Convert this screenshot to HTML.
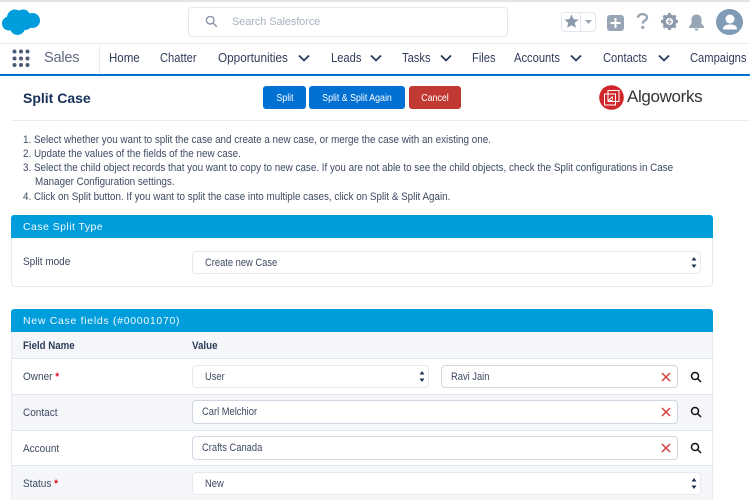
<!DOCTYPE html>
<html><head><meta charset="utf-8">
<style>
html,body{margin:0;padding:0;background:#fff}
#p{position:relative;width:750px;height:500px;overflow:hidden;background:#fff;font-family:"Liberation Sans",sans-serif;color:#3e4a63;font-size:11px}
#p div,#p span,#p svg{position:absolute}
.t{white-space:nowrap;line-height:14px}
.n{top:51px;font-size:12.5px;color:#2f3c5a;line-height:14px;white-space:nowrap;transform:scaleX(.893);transform-origin:0 0}
.b{top:86px;height:23px;line-height:24px;color:#fff;background:#0070d2;border-radius:3px;font-size:10.5px}
.b span{left:50%;top:0;white-space:nowrap;transform:translateX(-50%) scaleX(.84)}
.h{left:11px;width:702px;height:23px;background:#009ddc;border-radius:3px 3px 0 0;}
.ht{left:23px;color:#f2f9fd;font-size:10.5px;line-height:14px;white-space:nowrap}
.box{background:#fff;border:1px solid #e6e9ef;border-radius:4px;box-sizing:border-box}
.inp{background:#fff;border:1px solid #cfd7e3;border-radius:4px;box-sizing:border-box}
.l{left:23px;font-size:11px;color:#3e4a63;white-space:nowrap;line-height:14px;transform:scaleX(.91);transform-origin:0 0}
.v{font-size:11px;color:#3e4a63;white-space:nowrap;line-height:14px;transform:scaleX(.85);transform-origin:0 0}
.line{left:11px;width:702px;height:1px;background:#e2e6ee}
.req{color:#e01020;font-weight:bold}
.i{left:23px;font-size:11px;color:#3e4a63;white-space:nowrap;line-height:14px;transform:scaleX(.895);transform-origin:0 0}
</style></head><body>
<div id="p">
<div style="left:0;top:0;width:750px;height:2px;background:#e4e4e4"></div>
<svg style="left:2px;top:9px" width="39" height="27" viewBox="0 0 39 27"><g fill="#009ddc"><circle cx="13" cy="8.500" r="8"/><circle cx="21" cy="8" r="7.500"/><circle cx="30.500" cy="11.500" r="7.500"/><circle cx="7" cy="14.500" r="7"/><circle cx="15.500" cy="18.500" r="7.500"/><circle cx="23" cy="13" r="8"/></g></svg>
<div style="left:188px;top:7px;width:320px;height:30px;border:1px solid #e4e7ee;border-radius:4px;box-sizing:border-box"></div>
<svg style="left:205px;top:15px" width="13" height="13" viewBox="0 0 13 13" fill="none" stroke="#8a95a6" stroke-width="1.4"><circle cx="5.2" cy="5.2" r="3.8"/><path d="M8 8l3.8 3.8"/></svg>
<span class="t" style="left:232px;top:15px;font-size:11px;color:#a9b2c2;letter-spacing:-.1px">Search Salesforce</span>
<div style="left:561px;top:12px;width:35px;height:20px;border:1px solid #e2e6ee;border-radius:4px;box-sizing:border-box"></div>
<div style="left:580px;top:12px;width:1px;height:20px;background:#e2e6ee"></div>
<svg style="left:564px;top:14px" width="15" height="15" viewBox="0 0 15 15"><path fill="#8d9aab" d="M7.5 .5l2.100 4.600 5 .5-3.800 3.300 1.100 5L7.500 11.300 3.100 13.900l1.100-5L.4 5.600l5-.5z"/></svg>
<svg style="left:584px;top:19px" width="9" height="6" viewBox="0 0 9 6"><path fill="#9aa5b5" d="M1 1h7L4.500 5z"/></svg>
<svg style="left:607px;top:15px" width="17" height="16" viewBox="0 0 17 16"><rect width="17" height="16" rx="3" fill="#97a5b5"/><path d="M8.500 3v10M3.500 8h10" stroke="#fff" stroke-width="2"/></svg>
<svg style="left:636px;top:13px" width="13" height="16" viewBox="0 0 13 16" fill="none"><path d="M2 4.800C2 2.500 4 1.200 6.500 1.200S11 2.500 11 4.600c0 2.900-4.200 2.700-4.200 6" stroke="#98a5b5" stroke-width="2.400"/><circle cx="6.800" cy="14.400" r="1.600" fill="#98a5b5"/></svg>
<svg style="left:661px;top:13px" width="17" height="17" viewBox="0 0 17 17"><circle cx="8.500" cy="8.500" r="5.300" fill="none" stroke="#8d9aab" stroke-width="3.400"/><path d="M8.500 0v3.500M8.500 13.500V17M0 8.500h3.500M13.500 8.500H17M2.500 2.500l2.500 2.500M12 12l2.500 2.500M14.500 2.500L12 5M5 12l-2.500 2.500" stroke="#8d9aab" stroke-width="3"/><path d="M9.500 5.500L7 8.800h3L7.500 11.500" fill="none" stroke="#8d9aab" stroke-width="1"/></svg>
<svg style="left:688px;top:14px" width="17" height="17" viewBox="0 0 17 17"><path fill="#97a5b5" d="M8.500 .5c3.200 0 5 2.200 5 5v4l2.500 3.200v1.300H1v-1.300l2.500-3.200v-4c0-2.800 1.800-5 5-5z"/><path fill="#97a5b5" d="M6.500 14.500h4a2 2 0 0 1-4 0z"/></svg>
<div style="left:716px;top:9px;width:27px;height:26px;border-radius:50%;background:#7f9bb5"></div>
<svg style="left:717px;top:9px" width="26" height="26" viewBox="0 0 26 26"><circle cx="13" cy="10" r="4.500" fill="#fff"/><path fill="#fff" d="M6 20.500c0-4 3-5 7-5s7 1 7 5z"/></svg>

<div style="left:0;top:43px;width:750px;height:1px;background:#e8ebf0"></div>
<div style="left:99px;top:44px;width:1px;height:30px;background:#e8ebf0"></div>
<div style="left:0;top:74px;width:750px;height:2px;background:#0070d2"></div>
<svg style="left:12px;top:49px" width="18" height="19" viewBox="0 0 18 19" fill="#4a5b78"><circle cx="2.500" cy="2.500" r="2"/><circle cx="9" cy="2.500" r="2"/><circle cx="15.500" cy="2.500" r="2"/><circle cx="2.500" cy="9.500" r="2"/><circle cx="9" cy="9.500" r="2"/><circle cx="15.500" cy="9.500" r="2"/><circle cx="2.500" cy="16" r="2"/><circle cx="9" cy="16" r="2"/><circle cx="15.500" cy="16" r="2"/></svg>
<span class="t" style="left:44px;top:51px;font-size:14.5px;color:#5f6b80;letter-spacing:-.2px">Sales</span>
<span class="n" style="left:109px;transform:scaleX(.92)">Home</span>
<span class="n" style="left:160px">Chatter</span>
<span class="n" style="left:218px;transform:scaleX(.94)">Opportunities</span>
<span class="n" style="left:331px">Leads</span>
<span class="n" style="left:402px">Tasks</span>
<span class="n" style="left:472px">Files</span>
<span class="n" style="left:514px">Accounts</span>
<span class="n" style="left:603px">Contacts</span>
<span class="n" style="left:690px">Campaigns</span>
<svg style="left:297px;top:54px" width="14" height="8" viewBox="0 0 14 8" fill="none" stroke="#1f2f55" stroke-width="1.600"><path d="M2 1.500l5 5 5-5"/></svg>
<svg style="left:369px;top:54px" width="14" height="8" viewBox="0 0 14 8" fill="none" stroke="#1f2f55" stroke-width="1.600"><path d="M2 1.500l5 5 5-5"/></svg>
<svg style="left:439px;top:54px" width="14" height="8" viewBox="0 0 14 8" fill="none" stroke="#1f2f55" stroke-width="1.600"><path d="M2 1.500l5 5 5-5"/></svg>
<svg style="left:569px;top:54px" width="14" height="8" viewBox="0 0 14 8" fill="none" stroke="#1f2f55" stroke-width="1.600"><path d="M2 1.500l5 5 5-5"/></svg>
<svg style="left:657px;top:54px" width="14" height="8" viewBox="0 0 14 8" fill="none" stroke="#1f2f55" stroke-width="1.600"><path d="M2 1.500l5 5 5-5"/></svg>

<span class="t" style="left:23px;top:90px;font-size:14px;font-weight:bold;color:#16305a;line-height:16px">Split Case</span>
<div class="b" style="left:263px;width:43px"><span>Split</span></div>
<div class="b" style="left:309px;width:96px"><span>Split &amp; Split Again</span></div>
<div class="b" style="left:409px;width:52px;background:#c23934"><span>Cancel</span></div>
<svg style="left:599px;top:85px" width="25" height="25" viewBox="0 0 25 25"><circle cx="12.500" cy="12.500" r="12.300" fill="#d0262a"/><g fill="none" stroke="#fff" stroke-width="1"><rect x="9" y="5.500" width="11" height="11"/><rect x="5.500" y="9" width="11" height="11"/><path d="M9.500 15.500l4-4M13.500 11.500v3M10.500 15.500h3"/></g></svg>
<span class="t" style="left:627px;top:87px;font-size:17px;line-height:20px;color:#333;letter-spacing:-.35px">Algoworks</span>
<div style="left:11px;top:120px;width:739px;height:1px;background:#e8ebf0"></div>

<span class="i" style="top:133px">1. Select whether you want to split the case and create a new case, or merge the case with an existing one.</span>
<span class="i" style="top:147px">2. Update the values of the fields of the new case.</span>
<span class="i" style="top:161px">3. Select the child object records that you want to copy to new case. If you are not able to see the child objects, check the Split configurations in Case</span>
<span class="i" style="top:175px;left:34.500px">Manager Configuration settings.</span>
<span class="i" style="top:190px">4. Click on Split button. If you want to split the case into multiple cases, click on Split &amp; Split Again.</span>

<div class="box" style="left:11px;top:230px;width:702px;height:57px"></div>
<div class="h" style="top:215px"></div>
<span class="ht" style="top:220px;letter-spacing:.45px">Case Split Type</span>
<span class="l" style="top:255px">Split mode</span>
<div class="box" style="left:192px;top:251px;width:509px;height:23px"></div>
<span class="v" style="left:205px;top:256px">Create new Case</span>
<svg style="left:691px;top:256px" width="6" height="13" viewBox="0 0 6 13" fill="#1f2f55"><path d="M3 1l2.500 3.500h-5zM3 12L.5 8.500h5z"/></svg>

<div class="h" style="top:309px"></div>
<span class="ht" style="top:314px;letter-spacing:.7px">New Case fields (#00001070)</span>
<div style="left:11px;top:332px;width:702px;height:26px;background:#f4f6f9"></div>
<div style="left:11px;top:395px;width:702px;height:35px;background:#f4f6f9"></div>
<div style="left:11px;top:466px;width:702px;height:34px;background:#f4f6f9"></div>
<div style="left:11px;top:332px;width:1px;height:168px;background:#e8ebf0"></div>
<div style="left:712px;top:332px;width:1px;height:168px;background:#e8ebf0"></div>
<div class="line" style="top:358px"></div>
<div class="line" style="top:394px"></div>
<div class="line" style="top:430px"></div>
<div class="line" style="top:465px"></div>
<span class="l" style="top:339px;font-weight:bold;color:#2f3c5a;transform:scaleX(.88)">Field Name</span>
<span class="l" style="top:339px;left:192px;font-weight:bold;color:#2f3c5a;transform:scaleX(.89)">Value</span>
<span class="l" style="top:370px">Owner <b class="req">*</b></span>
<span class="l" style="top:406px">Contact</span>
<span class="l" style="top:442px">Account</span>
<span class="l" style="top:477px">Status <b class="req">*</b></span>

<div class="box" style="left:192px;top:365px;width:237px;height:23px"></div>
<span class="v" style="left:205px;top:370px">User</span>
<svg style="left:419px;top:370px" width="6" height="13" viewBox="0 0 6 13" fill="#1f2f55"><path d="M3 1l2.500 3.500h-5zM3 12L.5 8.500h5z"/></svg>
<div class="inp" style="left:441px;top:365px;width:237px;height:23px"></div>
<span class="v" style="left:451px;top:370px">Ravi Jain</span>
<svg style="left:661px;top:372px" width="10" height="10" viewBox="0 0 10 10" stroke="#d2403c" stroke-width="1.500"><path d="M1 1l8 8M9 1l-8 8"/></svg>
<svg style="left:690px;top:371px" width="12" height="12" viewBox="0 0 12 12" fill="none" stroke="#111" stroke-width="1.500"><circle cx="5" cy="5" r="3.500"/><path d="M7.500 7.500l3.500 3.500"/></svg>

<div class="inp" style="left:192px;top:400px;width:486px;height:24px"></div>
<span class="v" style="left:202px;top:405px">Carl Melchior</span>
<svg style="left:661px;top:407px" width="10" height="10" viewBox="0 0 10 10" stroke="#d2403c" stroke-width="1.500"><path d="M1 1l8 8M9 1l-8 8"/></svg>
<svg style="left:690px;top:406px" width="12" height="12" viewBox="0 0 12 12" fill="none" stroke="#111" stroke-width="1.500"><circle cx="5" cy="5" r="3.500"/><path d="M7.500 7.500l3.500 3.500"/></svg>

<div class="inp" style="left:192px;top:436px;width:486px;height:24px"></div>
<span class="v" style="left:202px;top:441px">Crafts Canada</span>
<svg style="left:661px;top:443px" width="10" height="10" viewBox="0 0 10 10" stroke="#d2403c" stroke-width="1.500"><path d="M1 1l8 8M9 1l-8 8"/></svg>
<svg style="left:690px;top:442px" width="12" height="12" viewBox="0 0 12 12" fill="none" stroke="#111" stroke-width="1.500"><circle cx="5" cy="5" r="3.500"/><path d="M7.500 7.500l3.500 3.500"/></svg>

<div class="box" style="left:192px;top:472px;width:509px;height:23px"></div>
<span class="v" style="left:205px;top:477px">New</span>
<svg style="left:691px;top:477px" width="6" height="13" viewBox="0 0 6 13" fill="#1f2f55"><path d="M3 1l2.500 3.500h-5zM3 12L.5 8.500h5z"/></svg>
</div>
</body></html>
